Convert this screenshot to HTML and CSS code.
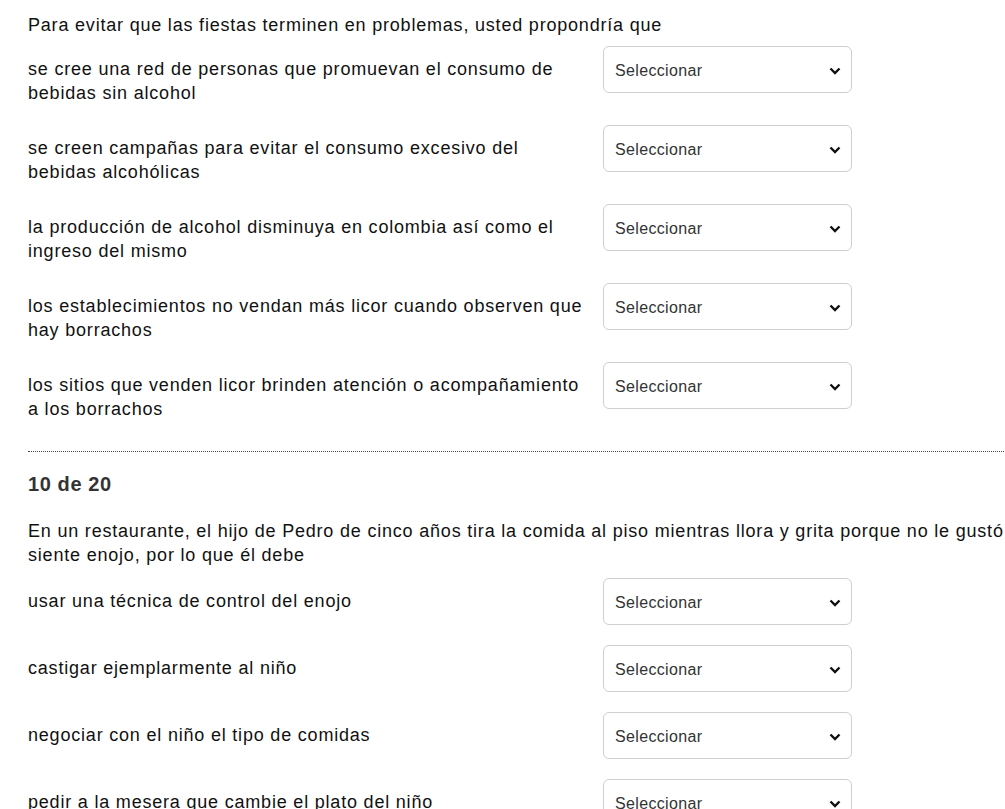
FILE: index.html
```html
<!DOCTYPE html>
<html lang="es">
<head>
<meta charset="utf-8">
<link rel="stylesheet" href="styles.css">
</head>
<body>
<div class="page">
  <section class="block">
    <p class="question first">Para evitar que las fiestas terminen en problemas, usted propondría que</p>
    <div class="row">
      <div class="label">se cree una red de personas que promuevan el consumo de bebidas sin alcohol</div>
      <div class="select"><span>Seleccionar</span><svg class="chev" viewBox="0 0 12 8" width="12" height="8"><path d="M1.5 1.5 L6 6 L10.5 1.5" fill="none" stroke="#111" stroke-width="2.4"/></svg></div>
    </div>
    <div class="row">
      <div class="label">se creen campañas para evitar el consumo excesivo del bebidas alcohólicas</div>
      <div class="select"><span>Seleccionar</span><svg class="chev" viewBox="0 0 12 8" width="12" height="8"><path d="M1.5 1.5 L6 6 L10.5 1.5" fill="none" stroke="#111" stroke-width="2.4"/></svg></div>
    </div>
    <div class="row">
      <div class="label">la producción de alcohol disminuya en colombia así como el ingreso del mismo</div>
      <div class="select"><span>Seleccionar</span><svg class="chev" viewBox="0 0 12 8" width="12" height="8"><path d="M1.5 1.5 L6 6 L10.5 1.5" fill="none" stroke="#111" stroke-width="2.4"/></svg></div>
    </div>
    <div class="row">
      <div class="label">los establecimientos no vendan más licor cuando observen que hay borrachos</div>
      <div class="select"><span>Seleccionar</span><svg class="chev" viewBox="0 0 12 8" width="12" height="8"><path d="M1.5 1.5 L6 6 L10.5 1.5" fill="none" stroke="#111" stroke-width="2.4"/></svg></div>
    </div>
    <div class="row">
      <div class="label">los sitios que venden licor brinden atención o acompañamiento a los borrachos</div>
      <div class="select"><span>Seleccionar</span><svg class="chev" viewBox="0 0 12 8" width="12" height="8"><path d="M1.5 1.5 L6 6 L10.5 1.5" fill="none" stroke="#111" stroke-width="2.4"/></svg></div>
    </div>
  </section>
  <hr class="sep">
  <section class="block">
    <h2 class="num">10 de 20</h2>
    <p class="question">En un restaurante, el hijo de Pedro de cinco años tira la comida al piso mientras llora y grita porque no le gustó la comida. Pedro<br>siente enojo, por lo que él debe</p>
    <div class="row">
      <div class="label">usar una técnica de control del enojo</div>
      <div class="select"><span>Seleccionar</span><svg class="chev" viewBox="0 0 12 8" width="12" height="8"><path d="M1.5 1.5 L6 6 L10.5 1.5" fill="none" stroke="#111" stroke-width="2.4"/></svg></div>
    </div>
    <div class="row">
      <div class="label">castigar ejemplarmente al niño</div>
      <div class="select"><span>Seleccionar</span><svg class="chev" viewBox="0 0 12 8" width="12" height="8"><path d="M1.5 1.5 L6 6 L10.5 1.5" fill="none" stroke="#111" stroke-width="2.4"/></svg></div>
    </div>
    <div class="row">
      <div class="label">negociar con el niño el tipo de comidas</div>
      <div class="select"><span>Seleccionar</span><svg class="chev" viewBox="0 0 12 8" width="12" height="8"><path d="M1.5 1.5 L6 6 L10.5 1.5" fill="none" stroke="#111" stroke-width="2.4"/></svg></div>
    </div>
    <div class="row">
      <div class="label">pedir a la mesera que cambie el plato del niño</div>
      <div class="select"><span>Seleccionar</span><svg class="chev" viewBox="0 0 12 8" width="12" height="8"><path d="M1.5 1.5 L6 6 L10.5 1.5" fill="none" stroke="#111" stroke-width="2.4"/></svg></div>
    </div>
  </section>
</div>
</body>
</html>
```
FILE: styles.css
```css
html, body {
  margin: 0;
  padding: 0;
  overflow: hidden;
  background: #fff;
}
body {
  font-family: "Liberation Sans", Arial, sans-serif;
  font-size: 18px;
  line-height: 24px;
  letter-spacing: 0.8px;
  color: #111;
}
.page {
  padding: 13px 0 0 28px;
  width: 1200px;
}
.question {
  margin: 0 0 11px;
  white-space: nowrap;
}
.question.first {
  margin-bottom: 9px;
}
.row {
  display: flex;
  align-items: flex-start;
  margin-bottom: 20px;
}
.label {
  width: 560px;
  padding-top: 11px;
  margin-right: 15px;
}
.select {
  box-sizing: border-box;
  width: 249px;
  height: 47px;
  border: 1px solid #cfcfcf;
  border-radius: 6px;
  display: flex;
  align-items: center;
  justify-content: space-between;
  padding: 2px 10px 0 11px;
  font-size: 16px;
  letter-spacing: 0.35px;
  color: #333;
  flex-shrink: 0;
}
.chev {
  display: block;
}
.sep {
  margin: 30px 0 0 0;
  width: 976px;
  border: 0;
  border-top: 1px dotted #444;
  height: 0;
}
.num {
  margin: 18px 0 21px;
  font-size: 20px;
  line-height: 28px;
  font-weight: bold;
  letter-spacing: 0.6px;
  color: #333;
}
```
